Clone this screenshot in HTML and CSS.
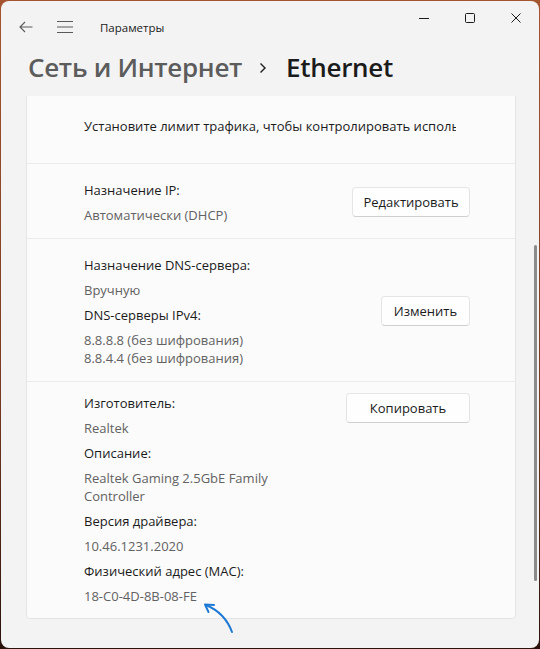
FILE: index.html
```html
<!DOCTYPE html>
<html lang="ru">
<head>
<meta charset="utf-8">
<title>Параметры</title>
<link rel="stylesheet" href="styles.css">
</head>
<body>
<div class="window">
  <div class="titlebar">
    <div class="tb-left">
      <svg class="ic-back" width="14" height="12" viewBox="0 0 14 12"><path d="M13.5 6H1 M6 1 L1 6 L6 11" fill="none" stroke="#5a5a5a" stroke-width="1.1"/></svg>
      <svg class="ic-menu" width="16" height="12" viewBox="0 0 16 12"><path d="M0 0.5H16 M0 6H16 M0 11.5H16" fill="none" stroke="#5a5a5a" stroke-width="1"/></svg>
      <span class="app-title">Параметры</span>
    </div>
    <div class="tb-controls">
      <div class="cap-btn"><svg width="10" height="10" viewBox="0 0 10 10"><path d="M0 5.5H10" stroke="#1b1b1b" stroke-width="1"/></svg></div>
      <div class="cap-btn"><svg width="10" height="10" viewBox="0 0 10 10"><rect x="0.5" y="0.5" width="9" height="9" rx="1" fill="none" stroke="#1b1b1b" stroke-width="1"/></svg></div>
      <div class="cap-btn"><svg width="10" height="10" viewBox="0 0 10 10"><path d="M0.5 0.5L9.5 9.5 M9.5 0.5L0.5 9.5" stroke="#1b1b1b" stroke-width="1"/></svg></div>
    </div>
  </div>

  <h1 class="breadcrumb">
    <span class="crumb-parent">Сеть и Интернет</span>
    <svg class="chev" width="8" height="12" viewBox="0 0 8 12"><path d="M1.5 1.5L6 6L1.5 10.5" fill="none" stroke="#1b1b1b" stroke-width="1.4"/></svg>
    <span class="crumb-current">Ethernet</span>
  </h1>

  <div class="viewport">
    <div class="card">
      <section class="row row-limit">
        <div class="limit-text">Установите лимит трафика, чтобы контролировать использование данных в этой сети</div>
      </section>

      <section class="row row-center">
        <div class="info">
          <div class="label">Назначение IP:</div>
          <div class="value">Автоматически (DHCP)</div>
        </div>
        <button class="btn btn-edit">Редактировать</button>
      </section>

      <section class="row row-center">
        <div class="info">
          <div class="label">Назначение DNS-сервера:</div>
          <div class="value">Вручную</div>
          <div class="label">DNS-серверы IPv4:</div>
          <div class="value">8.8.8.8 (без шифрования)<br>8.8.4.4 (без шифрования)</div>
        </div>
        <button class="btn btn-change">Изменить</button>
      </section>

      <section class="row row-top">
        <div class="info">
          <div class="label">Изготовитель:</div>
          <div class="value">Realtek</div>
          <div class="label">Описание:</div>
          <div class="value">Realtek Gaming 2.5GbE Family<br>Controller</div>
          <div class="label">Версия драйвера:</div>
          <div class="value">10.46.1231.2020</div>
          <div class="label">Физический адрес (MAC):</div>
          <div class="value">18-C0-4D-8B-08-FE</div>
        </div>
        <button class="btn btn-copy">Копировать</button>
      </section>
    </div>
  </div>

  <div class="scrollbar"></div>

  <svg class="annot" width="40" height="40" viewBox="0 0 40 40">
    <path d="M33 37 Q26 18 7 10" fill="none" stroke="#1f7ad4" stroke-width="2" stroke-linecap="round"/>
    <path d="M15 10 L6 9.5 L9.5 17" fill="none" stroke="#1f7ad4" stroke-width="2" stroke-linecap="round" stroke-linejoin="round"/>
  </svg>
</div>
</body>
</html>
```

FILE: styles.css
```css
* { box-sizing: border-box; }

html, body {
  margin: 0;
  padding: 0;
}

body {
  width: 540px;
  height: 649px;
  overflow: hidden;
  background: linear-gradient(#a4552f, #7a3a22 60%, #2a120b);
  font-family: "Segoe UI", "Open Sans", "Noto Sans", sans-serif;
  color: #1b1b1b;
}

.window {
  position: relative;
  margin: 1px;
  width: 538px;
  height: 647px;
  background: #f3f3f3;
  border-radius: 8px;
  overflow: hidden;
  display: flex;
  flex-direction: column;
}

/* title bar */
.titlebar {
  height: 48px;
  display: flex;
  justify-content: space-between;
  align-items: flex-start;
  flex-shrink: 0;
}

.tb-left {
  height: 48px;
  padding-top: 4px;
  display: flex;
  align-items: center;
}

.ic-back { margin-left: 18px; }
.ic-menu { margin-left: 24px; }

.app-title {
  margin-left: 27px;
  font-size: 11.5px;
  color: #1b1b1b;
}

.tb-controls {
  display: flex;
}

.cap-btn {
  width: 46px;
  height: 34px;
  display: flex;
  align-items: center;
  justify-content: center;
}

/* breadcrumb */
.breadcrumb {
  margin: 0 0 11px 0;
  padding-left: 27px;
  height: 36px;
  line-height: 36px;
  font-size: 26px;
  font-weight: 600;
  display: flex;
  align-items: center;
  letter-spacing: -0.3px;
}

.crumb-parent { color: #5c5c5c; }
.chev { margin: 2px 19px 0 17px; }
.crumb-current { color: #1b1b1b; }

/* content */
.viewport {
  flex: 1;
  overflow: hidden;
  padding: 0 23px 0 25px;
}

.card {
  margin-top: -8px;
  background: #fbfbfb;
  border: 1px solid #e5e5e5;
  border-radius: 4px;
}

.row {
  display: flex;
  justify-content: space-between;
  padding: 16px 45px 14px 57px;
  border-top: 1px solid #ebebeb;
  font-size: 13px;
}

.row:first-child { border-top: none; }

.row-limit {
  padding: 27px 59px 27px 57px;
}

.limit-text {
  width: 100%;
  overflow: hidden;
  white-space: nowrap;
  line-height: 20px;
  color: #1b1b1b;
}

.row-center { align-items: center; }
.row-top { align-items: flex-start; padding-top: 11px; padding-bottom: 13px; }

.label {
  line-height: 20px;
  margin-bottom: 6px;
  color: #1b1b1b;
}

.value {
  line-height: 18px;
  margin-bottom: 6px;
  color: #626262;
}

.info > .value:last-child { margin-bottom: 0; }

.btn {
  height: 30px;
  padding: 0;
  font-family: inherit;
  font-size: 13px;
  color: #1b1b1b;
  background: #fefefe;
  border: 1px solid #e5e5e5;
  border-bottom-color: #d0d0d0;
  border-radius: 4px;
}

.btn-edit { width: 118px; }
.btn-change { width: 89px; }
.btn-copy { width: 124px; }

/* overlay scrollbar */
.scrollbar {
  position: absolute;
  left: 533px;
  top: 244px;
  width: 3px;
  height: 336px;
  border-radius: 2px;
  background: #8b8b8b;
}

/* annotation arrow */
.annot {
  position: absolute;
  left: 198px;
  top: 594px;
}
```
